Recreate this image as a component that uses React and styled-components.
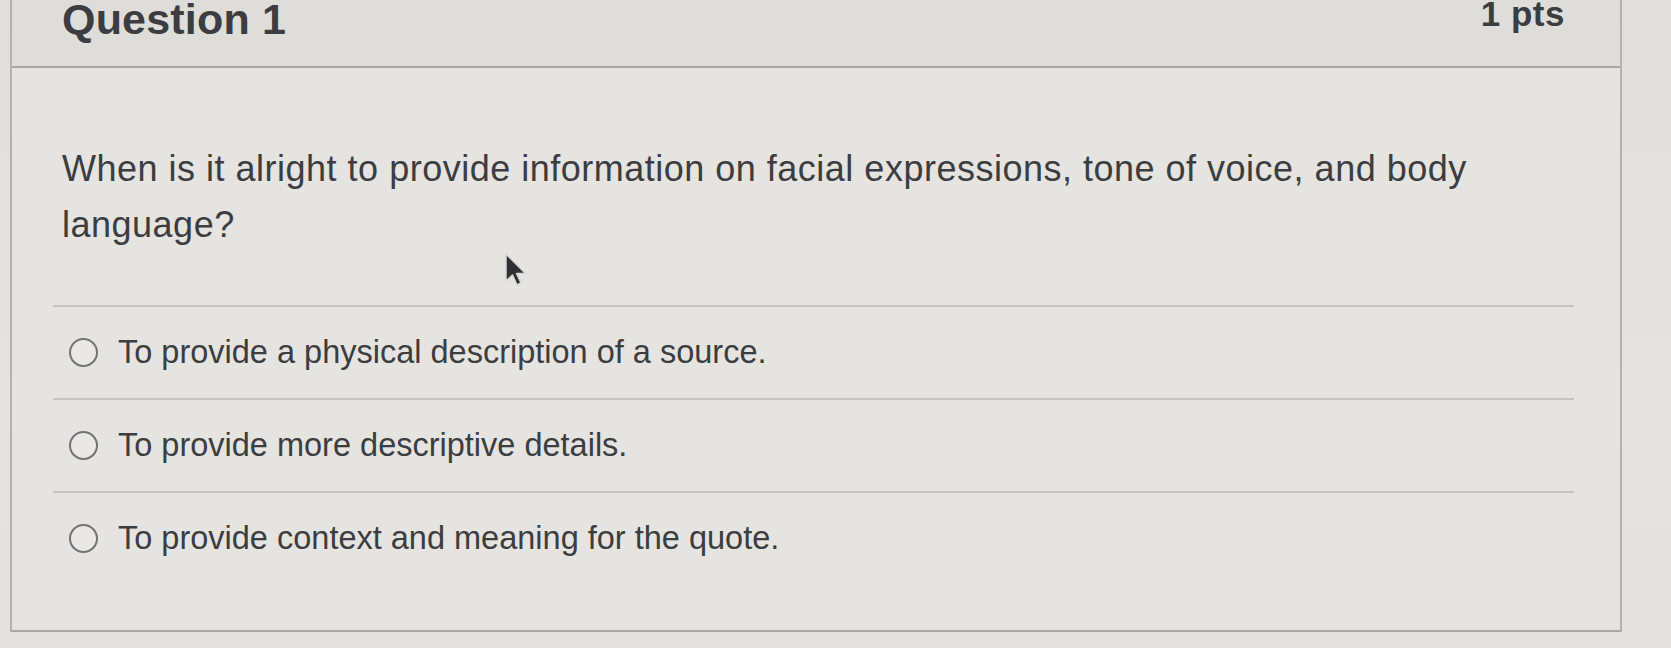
import React from 'react';
import styled, { createGlobalStyle } from 'styled-components';

const GlobalStyle = createGlobalStyle`
  html, body {
    margin: 0;
    padding: 0;
    background: #e2e1dd;
    font-family: "Liberation Sans", Arial, Helvetica, sans-serif;
    color: #3b3d40;
    overflow: hidden;
  }
`;

const Page = styled.div`
  position: relative;
  width: 1671px;
  height: 648px;
  overflow: hidden;
  background: linear-gradient(180deg, #e0dfdb 0%, #e4e3df 60%, #e3e2de 100%);
`;

const Card = styled.div`
  margin-left: 10px;
  width: 1608px;
  background: #e5e4e0;
  border-left: 2px solid #b3b2ae;
  border-right: 2px solid #b3b2ae;
  border-bottom: 2px solid #aaa9a5;
`;

const Header = styled.div`
  height: 66px;
  display: flex;
  justify-content: space-between;
  align-items: flex-start;
  padding: 0 55px 0 50px;
  background: #deddda;
  border-bottom: 2px solid #a9a8a4;
`;

const Title = styled.h2`
  margin: 1px 0 0;
  font-size: 43px;
  font-weight: 700;
  line-height: 37px;
  letter-spacing: 0.2px;
`;

const Points = styled.div`
  font-size: 35px;
  font-weight: 700;
  line-height: 28px;
  letter-spacing: 0.5px;
`;

const Body = styled.div`
  padding: 73px 46px 46px 41px;
`;

const QuestionText = styled.p`
  margin: 0 0 52px 9px;
  font-size: 36px;
  line-height: 56px;
  letter-spacing: 0.5px;
  max-width: 1460px;
`;

const Answers = styled.div`
  display: flex;
  flex-direction: column;
`;

const Answer = styled.label`
  display: flex;
  align-items: center;
  gap: 20px;
  height: 93px;
  box-sizing: border-box;
  padding: 0 0 2px 16px;
  border-top: 2px solid #c6c5c1;
  font-size: 32.5px;
  line-height: 36px;
`;

const Radio = styled.span`
  flex: none;
  width: 29px;
  height: 29px;
  box-sizing: border-box;
  border-radius: 50%;
  border: 2px solid #727375;
  background: #e9e8e4;
  margin-top: 2px;
`;

const Cursor = styled.svg`
  position: absolute;
  left: 504px;
  top: 252px;
`;

const answers = [
  'To provide a physical description of a source.',
  'To provide more descriptive details.',
  'To provide context and meaning for the quote.',
];

export default function App() {
  return (
    <Page>
      <GlobalStyle />
      <Card>
        <Header>
          <Title>Question 1</Title>
          <Points>1 pts</Points>
        </Header>
        <Body>
          <QuestionText>
            When is it alright to provide information on facial expressions, tone of voice, and body language?
          </QuestionText>
          <Answers>
            {answers.map((a) => (
              <Answer key={a}>
                <Radio />
                {a}
              </Answer>
            ))}
          </Answers>
        </Body>
      </Card>
      <Cursor width="26" height="38" viewBox="0 0 26 38">
        <path d="M2 2 L2 29 L8.5 23 L13 33 L17 31 L12.5 21.5 L21.5 21.5 Z" fill="#2e3033" stroke="#d8d7d3" strokeWidth="1.5" strokeLinejoin="round" />
      </Cursor>
    </Page>
  );
}
